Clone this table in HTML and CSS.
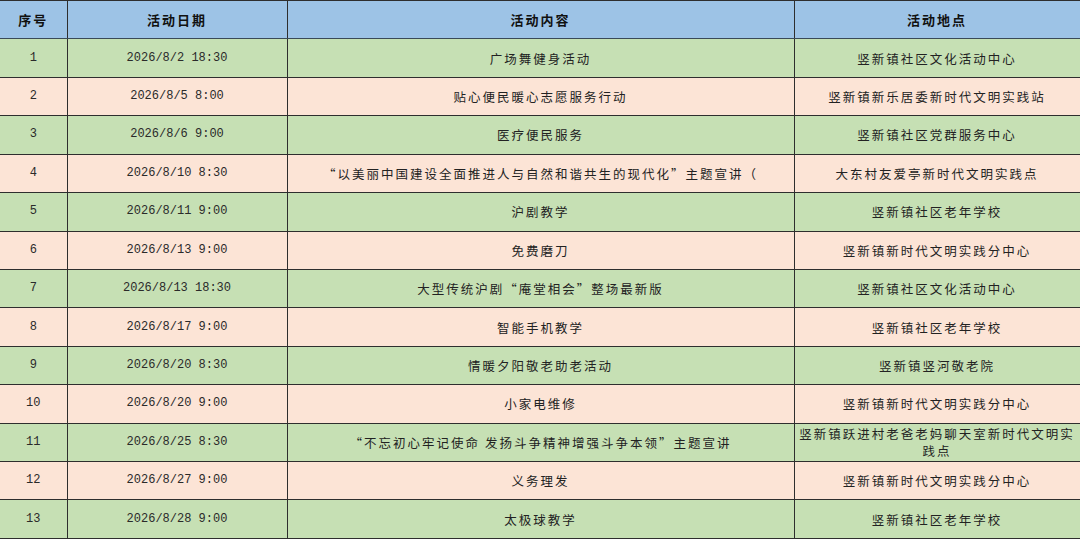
FILE: index.html
```html
<!DOCTYPE html>
<html lang="zh-CN">
<head>
<meta charset="utf-8">
<title>活动安排</title>
<link rel="stylesheet" href="styles.css">
</head>
<body>
<table class="schedule">
  <colgroup>
    <col class="c-no"><col class="c-date"><col class="c-content"><col class="c-place">
  </colgroup>
  <thead>
    <tr><th>序号</th><th>活动日期</th><th>活动内容</th><th>活动地点</th></tr>
  </thead>
  <tbody>
    <tr><td class="num">1</td><td class="num">2026/8/2 18:30</td><td>广场舞健身活动</td><td>竖新镇社区文化活动中心</td></tr>
    <tr><td class="num">2</td><td class="num">2026/8/5 8:00</td><td>贴心便民暖心志愿服务行动</td><td>竖新镇新乐居委新时代文明实践站</td></tr>
    <tr><td class="num">3</td><td class="num">2026/8/6 9:00</td><td>医疗便民服务</td><td>竖新镇社区党群服务中心</td></tr>
    <tr><td class="num">4</td><td class="num">2026/8/10 8:30</td><td>“以美丽中国建设全面推进人与自然和谐共生的现代化”主题宣讲（</td><td>大东村友爱亭新时代文明实践点</td></tr>
    <tr><td class="num">5</td><td class="num">2026/8/11 9:00</td><td>沪剧教学</td><td>竖新镇社区老年学校</td></tr>
    <tr><td class="num">6</td><td class="num">2026/8/13 9:00</td><td>免费磨刀</td><td>竖新镇新时代文明实践分中心</td></tr>
    <tr><td class="num">7</td><td class="num">2026/8/13 18:30</td><td>大型传统沪剧“庵堂相会”整场最新版</td><td>竖新镇社区文化活动中心</td></tr>
    <tr><td class="num">8</td><td class="num">2026/8/17 9:00</td><td>智能手机教学</td><td>竖新镇社区老年学校</td></tr>
    <tr><td class="num">9</td><td class="num">2026/8/20 8:30</td><td>情暖夕阳敬老助老活动</td><td>竖新镇竖河敬老院</td></tr>
    <tr><td class="num">10</td><td class="num">2026/8/20 9:00</td><td>小家电维修</td><td>竖新镇新时代文明实践分中心</td></tr>
    <tr><td class="num">11</td><td class="num">2026/8/25 8:30</td><td>“不忘初心牢记使命 发扬斗争精神增强斗争本领”主题宣讲</td><td>竖新镇跃进村老爸老妈聊天室新时代文明实践点</td></tr>
    <tr><td class="num">12</td><td class="num">2026/8/27 9:00</td><td>义务理发</td><td>竖新镇新时代文明实践分中心</td></tr>
    <tr><td class="num">13</td><td class="num">2026/8/28 9:00</td><td>太极球教学</td><td>竖新镇社区老年学校</td></tr>
  </tbody>
</table>
</body>
</html>
```
FILE: styles.css
```css
html, body {
  margin: 0;
  padding: 0;
  background: #ffffff;
}

.schedule {
  border-collapse: collapse;
  table-layout: fixed;
  width: 1080px;
  font-family: "Noto Sans CJK SC", "Noto Sans", sans-serif;
  color: #222222;
  font-size: 12.5px;
  letter-spacing: 2px;
}

.c-no { width: 67px; }
.c-date { width: 220px; }
.c-content { width: 507px; }
.c-place { width: 286px; }

.schedule th,
.schedule td {
  border: 1px solid #2e2e2e;
  text-align: center;
  vertical-align: middle;
  padding: 0 2px;
  line-height: 17px;
  font-weight: normal;
}

.schedule th:first-child,
.schedule td:first-child {
  border-left: none;
}

.schedule tr {
  height: 38.43px;
}

.schedule thead th {
  background: #9dc3e6;
  font-weight: bold;
  font-size: 13px;
  color: #111111;
  border-bottom-color: #3a4a58;
}

.schedule tbody tr:nth-child(odd) td {
  background: #c6e0b4;
}

.schedule tbody tr:nth-child(even) td {
  background: #fce4d6;
}

.schedule td.num {
  font-family: "Liberation Mono", "DejaVu Sans Mono", monospace;
  font-size: 12px;
  letter-spacing: 0;
  color: #2a2a2a;
}
```
